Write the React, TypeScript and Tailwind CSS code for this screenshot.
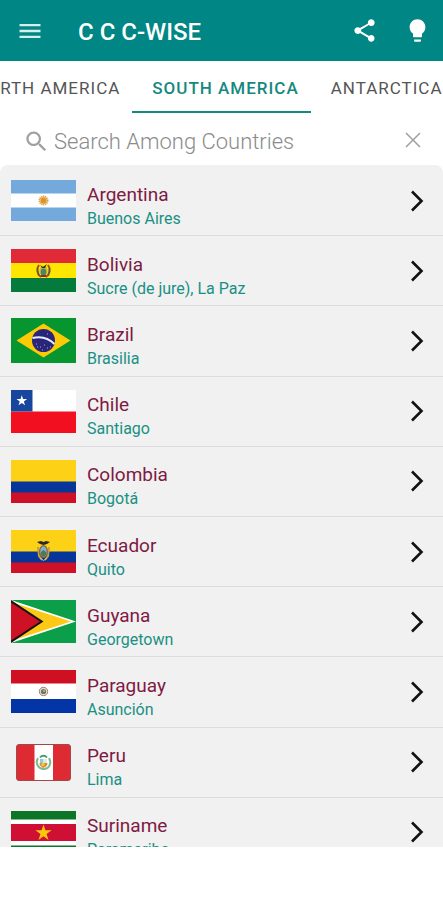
import type { ReactNode } from 'react';

const star = (cx: number, cy: number, r: number) =>
  Array.from({ length: 10 }, (_, i) => {
    const radius = i % 2 ? r * 0.382 : r;
    const a = (Math.PI * i) / 5 - Math.PI / 2;
    return `${cx + radius * Math.cos(a)},${cy + radius * Math.sin(a)}`;
  }).join(' ');

function Flag({ h, children }: { h: number; children: ReactNode }) {
  return (
    <svg width="65" height={h} viewBox={`0 0 65 ${h}`} aria-hidden="true">
      {children}
    </svg>
  );
}

const argentina = (
  <Flag h={41}>
    <path fill="#fff" d="M0 0h65v41H0z" />
    <path fill="#74a9dc" d="M0 0h65v13.5H0zM0 27.5h65V41H0z" />
    <circle cx="32.5" cy="20.5" r="4.6" fill="#f3c98a" opacity=".6" />
    <circle cx="32.5" cy="20.5" r="4" fill="none" stroke="#e0a040" strokeWidth="2" strokeDasharray="1 .8" />
    <circle cx="32.5" cy="20.5" r="2.9" fill="#dd9328" />
  </Flag>
);

const bolivia = (
  <Flag h={43}>
    <path fill="#e12a37" d="M0 0h65v14.5H0z" />
    <path fill="#ffe600" d="M0 14h65v15H0z" />
    <path fill="#047a3c" d="M0 29h65v14H0z" />
    <path d="M28 16c-3 4-2 9 2 12M37 16c3 4 2 9-2 12" fill="none" stroke="#b0442b" strokeWidth="2" />
    <path d="M26.500 19l1 8M38.500 19l-1 8" stroke="#2f7140" strokeWidth="1" />
    <ellipse cx="32.500" cy="22" rx="4" ry="5" fill="#d8b23c" />
    <ellipse cx="32.500" cy="23" rx="2.800" ry="3.500" fill="#3f8a68" />
    <path d="M29 16l3 2 4-3-2 4h-3z" fill="#33291f" />
    <path d="M30 26h5v2h-5z" fill="#8c2f22" />
  </Flag>
);

const brazil = (
  <Flag h={45}>
    <path fill="#07952f" d="M0 0h65v45H0z" />
    <path fill="#fdcb05" d="M5.500 22.500L32.500 5.500l27 17-27 17z" />
    <circle cx="32.500" cy="22.500" r="11.500" fill="#28257a" />
    <path d="M21.500 20c8-2 16 0 22 6" fill="none" stroke="#e8edf5" strokeWidth="2" />
    <path d="M25 26h1M29 29h1M33 27h1M36 30h1M39 29h1M31 32h1M26 29h1M36 16h1" stroke="#a9a8cf" />
  </Flag>
);

const chile = (
  <Flag h={43}>
    <path fill="#fff" d="M0 0h65v22H0z" />
    <path fill="#f20f20" d="M0 21.500h65V43H0z" />
    <path fill="#18469d" d="M0 0h21.500v21.500H0z" />
    <polygon points={star(10.8, 10.8, 5.6)} fill="#fff" />
  </Flag>
);

const tricolor = (
  <>
    <path fill="#fcd116" d="M0 0h65v22H0z" />
    <path fill="#07369a" d="M0 21.500h65V33H0z" />
    <path fill="#ce1126" d="M0 32.500h65V43H0z" />
  </>
);

const colombia = <Flag h={43}>{tricolor}</Flag>;

const ecuador = (
  <Flag h={43}>
    {tricolor}
    <path d="M26 12l4-1 2.500 1 2.500-1 4 1-3 2-3.500 1-3.500-1z" fill="#2c2a26" />
    <path d="M27 17l1 9 3 4M38 17l-1 9-3 4" fill="none" stroke="#c7a03a" strokeWidth="2" />
    <ellipse cx="32.500" cy="21.500" rx="4.500" ry="6.500" fill="#8b6a3d" />
    <ellipse cx="32.500" cy="21.500" rx="3.200" ry="5" fill="#7fb0d6" />
    <path d="M30 22l2.500-2 2.500 2v3l-2.500 1.500L30 25z" fill="#4c7a58" />
    <path d="M29 28l3.500 2.500L36 28" fill="none" stroke="#d8c58a" />
  </Flag>
);

const guyana = (
  <Flag h={43}>
    <path fill="#0b9f49" d="M0 0h65v43H0z" />
    <path fill="#fff" d="M0 0l65 21.500L0 43z" />
    <path fill="#fcc917" d="M0 2l60 19.500L0 41z" />
    <path fill="#171310" d="M0 0l32.500 21.500L0 43z" />
    <path fill="#cf1126" d="M0 2.500l29 19L0 40.500z" />
  </Flag>
);

const paraguay = (
  <Flag h={43}>
    <path fill="#fff" d="M0 0h65v43H0z" />
    <path fill="#cf1022" d="M0 0h65v13.500H0z" />
    <path fill="#0335a6" d="M0 29h65v14H0z" />
    <circle cx="32.500" cy="21.500" r="4.200" fill="#dfe3da" stroke="#b3766f" strokeWidth="1" />
    <circle cx="32.500" cy="21.500" r="2.600" fill="#5f7a62" />
    <circle cx="33" cy="21" r="1" fill="#d8b84e" />
  </Flag>
);

const peru = (
  <svg width="55" height="37" viewBox="0 0 55 37" aria-hidden="true">
    <rect x=".5" y=".5" width="54" height="36" rx="2.500" fill="#dd2a33" stroke="#a2484c" />
    <path fill="#fff" d="M18.500 1h18.500v35H18.500z" />
    <path d="M22 14c-3 5 0 10.500 5.500 11S36 19 33 14" fill="none" stroke="#7dbb95" strokeWidth="2" />
    <path d="M24 13.500c2-2.500 5-2.500 7 0" fill="none" stroke="#4c9c6b" strokeWidth="2" />
    <path fill="#93c9de" d="M24 15h3.500v4H24z" />
    <path fill="#dfe9dc" d="M27.500 15H31v4h-3.500z" />
    <path fill="#e0892f" d="M23.500 19h8c0 3-2.500 4-4 5-1.500-1-4-2-4-5z" />
    <circle cx="27" cy="20.500" r="1.700" fill="#efc93c" />
  </svg>
);

const suriname = (
  <Flag h={43}>
    <path fill="#fff" d="M0 0h65v43H0z" />
    <path fill="#0c7527" d="M0 0h65v8.500H0zM0 34.500h65V43H0z" />
    <path fill="#cf1034" d="M0 13h65v17H0z" />
    <polygon points={star(32.5, 22, 8.5)} fill="#fdc60d" />
  </Flag>
);

const countries = [
  { name: 'Argentina', capital: 'Buenos Aires', flag: argentina },
  { name: 'Bolivia', capital: 'Sucre (de jure), La Paz', flag: bolivia },
  { name: 'Brazil', capital: 'Brasilia', flag: brazil },
  { name: 'Chile', capital: 'Santiago', flag: chile },
  { name: 'Colombia', capital: 'Bogotá', flag: colombia },
  { name: 'Ecuador', capital: 'Quito', flag: ecuador },
  { name: 'Guyana', capital: 'Georgetown', flag: guyana },
  { name: 'Paraguay', capital: 'Asunción', flag: paraguay },
  { name: 'Peru', capital: 'Lima', flag: peru },
  { name: 'Suriname', capital: 'Paramaribo', flag: suriname },
];

function Icon({ size, d }: { size: number; d: string }) {
  return (
    <svg width={size} height={size} viewBox="0 0 24 24" fill="currentColor" aria-hidden="true">
      <path d={d} />
    </svg>
  );
}

export default function App() {
  return (
    <div className="flex h-screen flex-col bg-white pb-[53px] font-[Roboto,'Liberation_Sans',sans-serif]">
      <header className="flex h-[61px] shrink-0 items-center bg-[#008684] pr-3 pl-4 text-white">
        <button aria-label="Menu" className="text-[#d5eeed]">
          <Icon size={28} d="M3 18h18v-2H3v2zm0-5h18v-2H3v2zm0-7v2h18V6H3z" />
        </button>
        <h1 className="ml-[34px] pt-[2px] text-[24px] leading-7 font-medium whitespace-nowrap">C C C-WISE</h1>
        <div className="ml-auto flex items-center gap-[26px]">
          <button aria-label="Share">
            <Icon
              size={27}
              d="M18 16.08c-.76 0-1.440.3-1.960.770L8.910 12.700c.05-.23.09-.46.09-.7s-.04-.47-.09-.7l7.050-4.110c.54.5 1.250.81 2.040.81 1.660 0 3-1.340 3-3s-1.340-3-3-3-3 1.340-3 3c0 .24.04.47.09.7L8.040 9.810C7.500 9.310 6.790 9 6 9c-1.660 0-3 1.340-3 3s1.340 3 3 3c.79 0 1.500-.31 2.040-.81l7.120 4.160c-.05.21-.08.43-.08.65 0 1.610 1.310 2.920 2.920 2.920s2.920-1.310 2.920-2.920-1.310-2.920-2.920-2.920z"
            />
          </button>
          <button aria-label="Tips">
            <Icon
              size={27}
              d="M9 21c0 .5.4 1 1 1h4c.6 0 1-.5 1-1v-1H9v1zm3-19C8.100 2 5 5.100 5 9c0 2.400 1.200 4.500 3 5.700V17c0 .5.4 1 1 1h6c.6 0 1-.5 1-1v-2.300c1.800-1.300 3-3.400 3-5.700 0-3.900-3.100-7-7-7z"
            />
          </button>
        </div>
      </header>

      <nav aria-label="Continents" className="flex h-[52px] shrink-0 overflow-hidden text-[17px] leading-5 font-normal tracking-[1px] whitespace-nowrap text-[#555]">
        <div className="flex min-w-0 flex-1 justify-end">
          <button className="shrink-0 pt-px pr-3 pl-5">NORTH AMERICA</button>
        </div>
        <button aria-current="true" className="shrink-0 border-b-2 border-[#14897f] pt-[3px] pr-3 pl-5 font-medium text-[#14897f]">
          SOUTH AMERICA
        </button>
        <div className="flex min-w-0 flex-1">
          <button className="shrink-0 pt-px pr-3 pl-5">ANTARCTICA</button>
        </div>
      </nav>

      <div className="flex h-[52px] shrink-0 items-center pt-[5px] pr-[19px] pl-[23px] text-[#a0a0a0]">
        <Icon
          size={27}
          d="M15.500 14h-.79l-.28-.27C15.410 12.590 16 11.110 16 9.500 16 5.910 13.090 3 9.500 3S3 5.910 3 9.500 5.910 16 9.500 16c1.610 0 3.090-.59 4.230-1.570l.27.28v.79l5 4.990L20.490 19l-4.990-5zm-6 0C7.010 14 5 11.990 5 9.500S7.010 5 9.500 5 14 7.010 14 9.500 11.990 14 9.500 14z"
        />
        <input
          type="text"
          aria-label="Search Among Countries"
          placeholder="Search Among Countries"
          className="ml-1 min-w-0 flex-1 text-[22px] leading-7 font-light text-[#444] outline-none placeholder:text-[#8c8c8c]"
        />
        <button aria-label="Clear search" className="px-[3px] pb-1">
          <svg width="16" height="16" viewBox="0 0 16 16" fill="none" stroke="currentColor" strokeWidth="1.500" aria-hidden="true">
            <path d="M1 1l14 14M15 1L1 15" />
          </svg>
        </button>
      </div>

      <main className="min-h-0 flex-1 overflow-y-auto rounded-t-lg bg-[#f1f1f1] [scrollbar-width:none]">
        <ul className="grid min-h-[703px] auto-rows-fr pt-px">
          {countries.map((c) => (
            <li key={c.name} className="border-b border-[#dcdcdc]">
              <button className="flex h-full w-full items-center pr-[19px] pl-[11px] text-left">
                <span className="flex w-[65px] shrink-0 justify-center">{c.flag}</span>
                <span className="ml-[11px] flex min-w-0 flex-1 flex-col pt-3">
                  <span className="text-[19px] leading-6 text-[#7e1a43]">{c.name}</span>
                  <span className="text-[16px] leading-6 text-[#199084]">{c.capital}</span>
                </span>
                <svg width="14" height="22" viewBox="0 0 14 22" fill="none" stroke="#111" strokeWidth="2.600" aria-hidden="true">
                  <path d="M2 1.500l9.500 9.500L2 20.500" />
                </svg>
              </button>
            </li>
          ))}
        </ul>
      </main>
    </div>
  );
}
